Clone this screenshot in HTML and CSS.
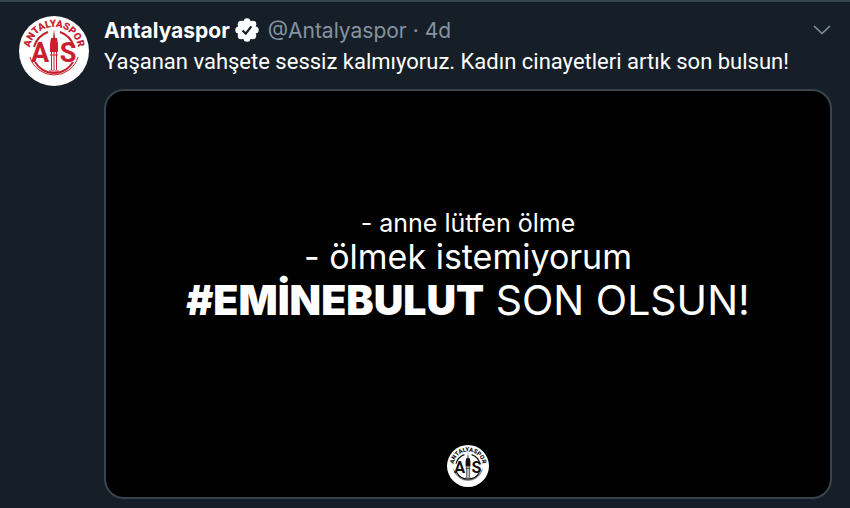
FILE: index.html
```html
<!DOCTYPE html>
<html lang="tr">
<head>
    <meta charset="UTF-8">
    <meta name="viewport" content="width=device-width, initial-scale=1.0">
    <title>Antalyaspor</title>
    <link rel="stylesheet" href="styles.css">
</head>
<body>
    <article class="tweet">
        <a href="#" class="avatar" aria-label="Antalyaspor">
            <svg viewBox="0 0 70 70">
                <defs>
                    <path id="crest-arc" d="M12 43 A24.300 24.300 0 1 1 58 43"/>
                </defs>
                <g id="crest">
                    <circle cx="35" cy="35" r="35" fill="#fff"/>
                    <path d="M11 41 A25 25 0 0 0 59 41" fill="none" stroke="currentColor" stroke-width="1"/>
                    <path d="M16 46 A22 22 0 0 0 54 46" fill="none" stroke="currentColor" stroke-width="2"/>
                    <path d="M15 31 A22 22 0 0 1 29 16 M41 16 A22 22 0 0 1 55 31" fill="none" stroke="currentColor" stroke-width="2"/>
                    <text class="crest-name"><textPath href="#crest-arc" startOffset="50%" text-anchor="middle">ANTALYASPOR</textPath></text>
                    <text class="crest-letter" x="21" y="46" text-anchor="middle">A</text>
                    <text class="crest-letter" x="49" y="46" text-anchor="middle">S</text>
                    <!-- minaret -->
                    <path d="M31 28 L32 22 H34 L35 13 L36 22 H38 L39 28 V36 H31 Z" fill="currentColor"/>
                    <path d="M32.500 36 V54 M35 36 V54 M37.500 36 V54 M31 39 H39 M30 55 H40" fill="none" stroke="currentColor" stroke-width="1"/>
                </g>
            </svg>
        </a>
        <div class="content">
            <header class="tweet-header">
                <a href="#" class="name">Antalyaspor</a>
                <svg class="verified" viewBox="0 0 24 24" aria-hidden="true">
                    <g fill="#fff">
                        <circle cx="12" cy="12" r="9.500"/>
                        <circle cx="12" cy="3.800" r="3.500"/>
                        <circle cx="17.800" cy="6.200" r="3.500"/>
                        <circle cx="20.200" cy="12" r="3.500"/>
                        <circle cx="17.800" cy="17.800" r="3.500"/>
                        <circle cx="12" cy="20.200" r="3.500"/>
                        <circle cx="6.200" cy="17.800" r="3.500"/>
                        <circle cx="3.800" cy="12" r="3.500"/>
                        <circle cx="6.200" cy="6.200" r="3.500"/>
                    </g>
                    <path d="M7.500 12.500 L10.800 15.600 L16.300 8.300" fill="none" stroke="#161f28" stroke-width="2.200"/>
                </svg>
                <span class="meta">@Antalyaspor · 4d</span>
                <button type="button" class="more" aria-label="More">
                    <svg viewBox="0 0 18 10"><path d="M1 1 L9 8.500 L17 1" fill="none" stroke="currentColor" stroke-width="1.600"/></svg>
                </button>
            </header>
            <p class="text">Yaşanan vahşete sessiz kalmıyoruz. Kadın cinayetleri artık son bulsun!</p>
            <div class="media">
                <p class="line-small">- anne lütfen ölme</p>
                <p class="line-medium">- ölmek istemiyorum</p>
                <p class="line-large"><strong>#EMİNEBULUT</strong> SON OLSUN!</p>
                <svg class="media-crest" viewBox="0 0 70 70" aria-hidden="true"><use href="#crest"/></svg>
            </div>
        </div>
    </article>
</body>
</html>
```

FILE: styles.css
```css
* {
    box-sizing: border-box;
}

body {
    margin: 0;
    background-color: #161f28;
    color: #ffffff;
    font-family: Inter, "Liberation Sans", sans-serif;
}

a {
    color: inherit;
    text-decoration: none;
}

p {
    margin: 0;
}

.tweet {
    display: flex;
    gap: 15px;
    padding: 14px 18px 9px 19px;
    border-top: 2px solid #38444d;
}

.avatar {
    flex: none;
    width: 70px;
    height: 70px;
    color: #c8202c;
}

.avatar svg,
.more svg {
    display: block;
    width: 100%;
}

.crest-name {
    font: 900 10px Roboto, sans-serif;
    fill: currentColor;
}

.crest-letter {
    font: 700 27px Roboto, sans-serif;
    fill: currentColor;
}

.content {
    flex: 1;
    min-width: 0;
}

.tweet-header {
    display: flex;
    align-items: center;
    height: 28px;
    font-size: 21px;
}

.name {
    font-weight: 700;
}

.verified {
    flex: none;
    width: 24px;
    height: 24px;
    margin: 0 9px 0 5px;
}

.meta {
    color: #8494a2;
}

.more {
    width: 18px;
    margin-left: auto;
    margin-right: 1px;
    padding: 0;
    border: none;
    background: none;
    color: #8494a2;
    cursor: pointer;
}

.text {
    padding-top: 2px;
    font-family: Roboto, "Liberation Sans", sans-serif;
    font-size: 22px;
    line-height: 32px;
}

.media {
    display: flex;
    flex-direction: column;
    align-items: center;
    aspect-ratio: 16 / 9;
    margin-top: 11px;
    padding: 116px 0 10px;
    border: 2px solid #38444d;
    border-radius: 20px;
    background-color: #000000;
}

.line-small {
    font-size: 25px;
    line-height: 32px;
}

.line-medium {
    font-size: 34px;
    line-height: 36px;
}

.line-large {
    font-size: 41px;
    line-height: 50px;
}

.line-large strong {
    font-weight: 900;
}

.media-crest {
    width: 42px;
    height: 42px;
    margin-top: auto;
    color: #111111;
}
```
